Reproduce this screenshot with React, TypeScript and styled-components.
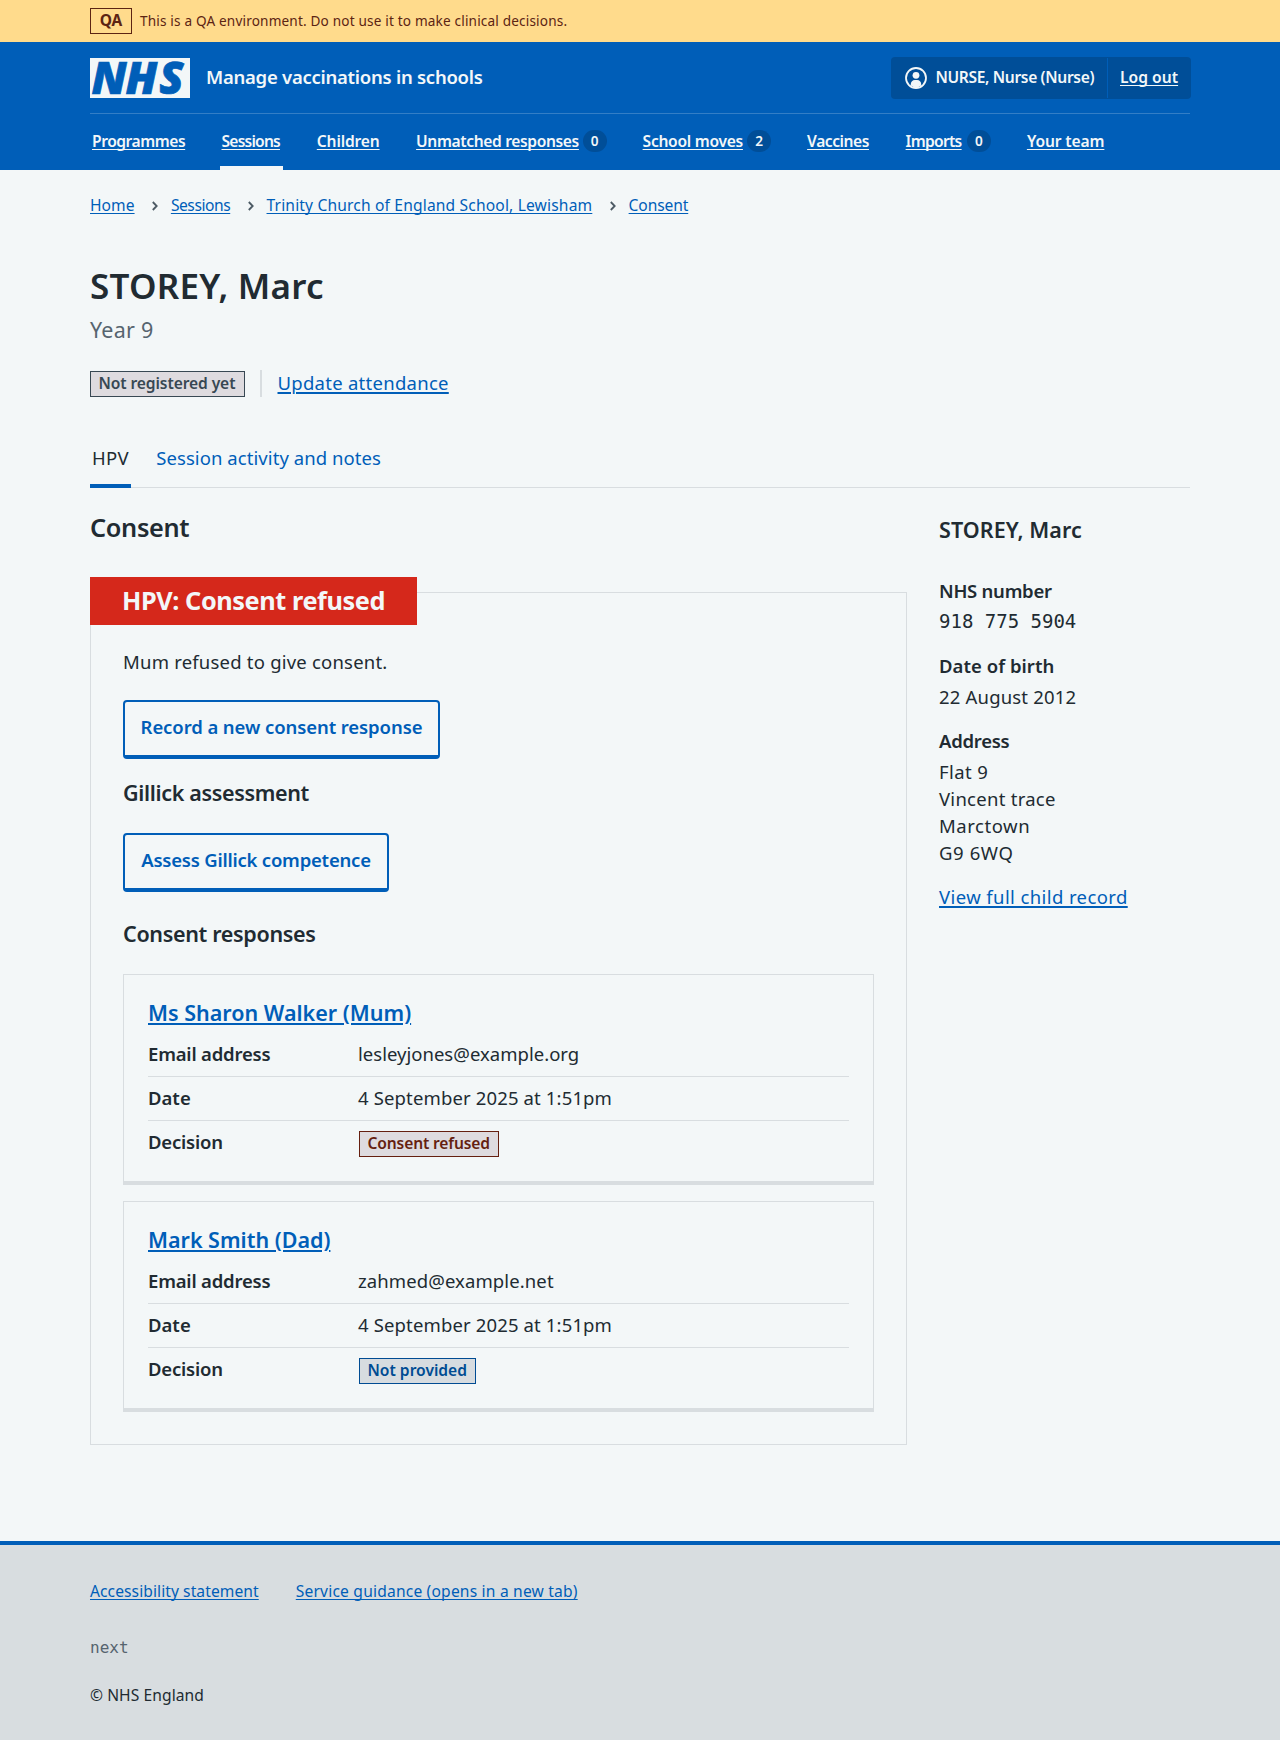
import React from "react";
import styled, { createGlobalStyle, css } from "styled-components";

const color = {
  page: "#f3f7f8",
  text: "#212b32",
  secondary: "#56646f",
  blue: "#005eb8",
  darkBlue: "#004e98",
  border: "#d8dde0",
  red: "#d5281b",
  warm: "#ffdb8c",
  brown: "#5c2413",
};
const sans = `"Noto Sans", "Open Sans", sans-serif`;
const mono = `"DejaVu Sans Mono", monospace`;

const GlobalStyle = createGlobalStyle`
  *, *::before, *::after { box-sizing: border-box; }
  body {
    margin: 0;
    background: ${color.page};
    color: ${color.text};
    font: 400 18.5px/28px ${sans};
  }
  h1, h2, h3, h4, p, dl, dt, dd { margin: 0; }
`;

type Tracked = { $ls?: number };
const tracking = css<Tracked>`
  letter-spacing: ${(p) => p.$ls ?? 0}px;
  white-space: nowrap;
`;

const Container = styled.div`
  width: 1100px;
  margin: 0 auto;
`;

const Link = styled.a<Tracked & { $large?: boolean }>`
  ${tracking}
  color: ${color.blue};
  text-decoration: underline;
  text-decoration-thickness: ${(p) => (p.$large ? "1.5px" : "1px")};
  text-decoration-skip-ink: ${(p) => (p.$large ? "auto" : "none")};
  text-underline-offset: ${(p) => (p.$large ? "2px" : "1.5px")};
`;

/* Environment banner */
const Banner = styled.div`
  background: ${color.warm};
  color: ${color.brown};
`;
const BannerRow = styled(Container)`
  display: flex;
  align-items: center;
  height: 42px;
`;
const EnvTag = styled.strong`
  width: 42px;
  height: 26px;
  margin-right: 8px;
  border: 1px solid ${color.brown};
  font: 700 15.5px/22px ${sans};
  text-align: center;
`;
const BannerText = styled.span<Tracked>`
  ${tracking}
  font-size: 13.6px;
`;

/* Header */
const Header = styled.header`
  background: ${color.blue};
  color: ${color.page};
`;
const HeaderTop = styled.div`
  display: flex;
  align-items: center;
  height: 72px;
  border-bottom: 1px solid #337ec6;
`;
const Logo = styled.svg`
  display: block;
  flex: none;
  width: 100px;
  height: 40px;
  margin-right: 16px;
  overflow: visible;
`;
const ServiceName = styled.a<Tracked>`
  ${tracking}
  padding-bottom: 2px;
  font-weight: 600;
`;
const Account = styled.div`
  display: flex;
  height: 42px;
  margin-left: auto;
  margin-right: -1px;
  border-radius: 4px;
  background: ${color.darkBlue};
  font: 600 15.6px/40px ${sans};
`;
const AccountItem = styled.div<{ $width: number }>`
  display: flex;
  align-items: flex-start;
  width: ${(p) => p.$width}px;
  padding-left: 14px;
  & + & {
    margin: 1px 0;
    border-left: 1px solid ${color.blue};
    padding-left: 12px;
    line-height: 38px;
  }
  svg {
    margin: 10px 8.5px 0 0;
  }
`;
const AccountName = styled.span<Tracked>`
  ${tracking}
`;
const InverseLink = styled(Link)`
  color: inherit;
`;

const Nav = styled.nav`
  display: flex;
  gap: 32px;
  height: 56px;
  font: 600 15.6px/52px ${sans};
`;
const NavItem = styled.div<{ $current?: boolean; $width: number }>`
  display: flex;
  align-items: center;
  width: ${(p) => p.$width}px;
  padding: 1px 2px 0;
  border-bottom: 4px solid ${(p) => (p.$current ? color.page : "transparent")};
`;
const Count = styled.span`
  width: 24px;
  height: 22px;
  margin-left: auto;
  border-radius: 12px;
  background: ${color.darkBlue};
  font: 600 13.6px/21px ${sans};
  text-align: center;
`;

/* Page heading */
const Breadcrumb = styled.nav`
  display: flex;
  align-items: center;
  padding-top: 21px;
  font-size: 15.6px;
  svg {
    margin: 1px 13px 0 17.3px;
  }
`;
const PageTitle = styled.h1<Tracked>`
  ${tracking}
  margin-top: 45px;
  font: 600 35px/44px ${sans};
`;
const Caption = styled.p<Tracked>`
  ${tracking}
  margin-top: 6px;
  color: ${color.secondary};
  font-size: 21.5px;
  line-height: 32px;
`;
const StatusRow = styled.div`
  display: flex;
  align-items: center;
  height: 27px;
  margin-top: 24px;
  line-height: 25px;
  > a {
    padding-bottom: 2px;
  }
`;
const Divider = styled.span`
  width: 2px;
  height: 27px;
  margin: 0 15.5px 0 15px;
  background: ${color.border};
`;
const tones = {
  grey: { fg: "#384853", bg: "#dedbdf" },
  red: { fg: "#651f10", bg: "#dedbdf" },
  blue: { fg: "#004c93", bg: "#d7dce0" },
};
const Tag = styled.strong<Tracked & { $tone: keyof typeof tones; $width: number }>`
  ${tracking}
  display: block;
  width: ${(p) => p.$width}px;
  height: 26px;
  padding-left: 7.5px;
  border: 1px solid ${(p) => tones[p.$tone].fg};
  background: ${(p) => tones[p.$tone].bg};
  color: ${(p) => tones[p.$tone].fg};
  font: 600 15.6px/22px ${sans};
`;

const Tabs = styled.div`
  display: flex;
  gap: 23.5px;
  margin-top: 47px;
  box-shadow: inset 0 -1px ${color.border};
`;
const Tab = styled.a<Tracked & { $current?: boolean }>`
  ${tracking}
  padding: 0 2px 12px;
  border-bottom: 4px solid ${(p) => (p.$current ? color.blue : "transparent")};
  color: ${(p) => (p.$current ? color.text : color.blue)};
`;

/* Content */
const Columns = styled.main`
  display: grid;
  grid-template-columns: 817px 1fr;
  column-gap: 32px;
`;
const SectionTitle = styled.h2<Tracked>`
  ${tracking}
  margin: 21px 0 47px;
  font: 600 25.3px/36px ${sans};
`;
const Panel = styled.section`
  padding: 0 32px 32px;
  border: 1px solid ${color.border};
`;
const PanelTitle = styled.h3<Tracked>`
  ${tracking}
  width: 327px;
  height: 48px;
  margin: -16px 0 23px -33px;
  padding-left: 32px;
  background: ${color.red};
  color: ${color.page};
  font: 700 25.3px/47px ${sans};
`;
const Text = styled.p<Tracked>`
  ${tracking}
`;
const Button = styled.button<Tracked & { $width: number }>`
  ${tracking}
  display: block;
  width: ${(p) => p.$width}px;
  height: 59px;
  margin-top: 24px;
  padding: 11px 0 14px;
  border: 2px solid ${color.blue};
  border-bottom-width: 4px;
  border-radius: 4px;
  background: transparent;
  color: ${color.blue};
  font: 600 18.5px/28px ${sans};
`;
const SubTitle = styled.h4<Tracked & { $top: number; $bottom?: number }>`
  ${tracking}
  margin: ${(p) => p.$top}px 0 ${(p) => p.$bottom ?? 25}px;
  font: 600 21.5px/30px ${sans};
`;
const Responses = styled.div`
  display: grid;
  gap: 16px;
`;
const Card = styled.article`
  padding: 23px 24px 25px;
  border: 1px solid ${color.border};
  border-bottom-width: 4px;
`;
const CardTitle = styled.h4`
  margin-bottom: 5px;
  font: 600 21.5px/30px ${sans};
`;
const Row = styled.div`
  display: grid;
  grid-template-columns: 210px 1fr;
  height: 44px;
  padding-top: 7px;
  border-bottom: 1px solid ${color.border};
  &:last-child {
    height: 35px;
    border-bottom: 0;
  }
`;
const Term = styled.dt<Tracked>`
  ${tracking}
  font-weight: 600;
`;
const Value = styled.dd<Tracked>`
  ${tracking}
`;
const TagValue = styled.dd`
  padding: 3px 0 0 1px;
`;

/* Child summary */
const Aside = styled.aside`
  padding-top: 27px;
  line-height: 27px;
`;
const Details = styled.dl`
  dd {
    margin: 4px 0 17px;
  }
`;
const NhsNumber = styled.dd`
  font-family: ${mono};
  font-size: 19px;
  white-space: nowrap;
`;

/* Footer */
const Footer = styled.footer`
  height: 199px;
  margin-top: 96px;
  padding-top: 34px;
  border-top: 4px solid ${color.blue};
  background: ${color.border};
  font-size: 15.6px;
  line-height: 24px;
`;
const FooterLinks = styled.div`
  display: flex;
  gap: 37px;
  margin-bottom: 33px;
`;
const Version = styled.p`
  margin-bottom: 23px;
  color: ${color.secondary};
  font-family: ${mono};
  font-size: 16px;
`;

const NhsLogo = () => (
  <Logo viewBox="0 0 100 40" role="img" aria-label="NHS">
    <rect width="100" height="40" fill={color.page} />
    <text
      x="1.6 35.6 69.2"
      y="36"
      fill={color.blue}
      stroke={color.blue}
      strokeWidth="0.7"
      fontFamily={`"Open Sans", sans-serif`}
      fontSize="44.5"
      fontWeight="800"
      fontStyle="italic"
    >
      NHS
    </text>
  </Logo>
);

const UserIcon = () => (
  <svg width="22" height="22" viewBox="0 0 22 22" fill={color.page}>
    <circle cx="11" cy="11" r="10" fill="none" stroke={color.page} strokeWidth="1.8" />
    <circle cx="11" cy="8.3" r="3.4" />
    <path d="M5.8 18.5v-1.2c0-2.6 1.8-4.3 4-4.3h2.4c2.2 0 4 1.7 4 4.3v1.2A9 9 0 0 1 5.8 18.5Z" />
  </svg>
);

const Chevron = () => (
  <svg width="6" height="10" viewBox="0 0 6 10" fill="none" stroke="#4c5a64" strokeWidth="1.8">
    <path d="M0.8 1 4.7 5 0.8 9" />
  </svg>
);

const navItems = [
  { label: "Programmes", ls: -0.46, width: 97.5 },
  { label: "Sessions", ls: -0.78, width: 63.3, current: true },
  { label: "Children", ls: -0.15, width: 67.3 },
  { label: "Unmatched responses", ls: -0.37, width: 194.5, count: 0 },
  { label: "School moves", ls: -0.28, width: 132.5, count: 2 },
  { label: "Vaccines", ls: -0.45, width: 66.5 },
  { label: "Imports", ls: -0.7, width: 89.3, count: 0 },
  { label: "Your team", ls: -0.12, width: 81 },
];

const crumbs = [
  { label: "Home", ls: 0.05 },
  { label: "Sessions", ls: -0.44 },
  { label: "Trinity Church of England School, Lewisham", ls: 0.16 },
  { label: "Consent", ls: -0.12 },
];

const responses = [
  {
    name: "Ms Sharon Walker (Mum)", nameLs: 0.01,
    email: "lesleyjones@example.org", emailLs: 0.02,
    decision: "Consent refused", decisionLs: -0.14, tone: "red" as const, width: 140,
  },
  {
    name: "Mark Smith (Dad)", nameLs: 0,
    email: "zahmed@example.net", emailLs: 0.1,
    decision: "Not provided", decisionLs: 0, tone: "blue" as const, width: 117,
  },
];

export default function App() {
  return (
    <>
      <GlobalStyle />
      <Banner>
        <BannerRow>
          <EnvTag>QA</EnvTag>
          <BannerText $ls={0.17}>This is a QA environment. Do not use it to make clinical decisions.</BannerText>
        </BannerRow>
      </Banner>
      <Header>
        <Container>
          <HeaderTop>
            <NhsLogo />
            <ServiceName $ls={-0.26}>Manage vaccinations in schools</ServiceName>
            <Account>
              <AccountItem $width={216}>
                <UserIcon />
                <AccountName $ls={-0.35}>NURSE, Nurse (Nurse)</AccountName>
              </AccountItem>
              <AccountItem $width={84}>
                <InverseLink $ls={0.03}>Log out</InverseLink>
              </AccountItem>
            </Account>
          </HeaderTop>
          <Nav>
            {navItems.map((n) => (
              <NavItem key={n.label} $current={n.current} $width={n.width}>
                <InverseLink $ls={n.ls}>{n.label}</InverseLink>
                {n.count !== undefined && <Count>{n.count}</Count>}
              </NavItem>
            ))}
          </Nav>
        </Container>
      </Header>
      <Container>
        <Breadcrumb>
          {crumbs.map((c, i) => (
            <React.Fragment key={c.label}>
              {i > 0 && <Chevron />}
              <Link $ls={c.ls}>{c.label}</Link>
            </React.Fragment>
          ))}
        </Breadcrumb>
        <PageTitle $ls={0.24}>STOREY, Marc</PageTitle>
        <Caption $ls={0.25}>Year 9</Caption>
        <StatusRow>
          <Tag $tone="grey" $width={155} $ls={-0.1}>Not registered yet</Tag>
          <Divider />
          <Link $large $ls={0.27}>Update attendance</Link>
        </StatusRow>
        <Tabs>
          <Tab $current $ls={0.25}>HPV</Tab>
          <Tab $ls={0.07}>Session activity and notes</Tab>
        </Tabs>
        <Columns>
          <div>
            <SectionTitle $ls={-0.33}>Consent</SectionTitle>
            <Panel>
              <PanelTitle $ls={-0.42}>HPV: Consent refused</PanelTitle>
              <Text $ls={0.21}>Mum refused to give consent.</Text>
              <Button $width={317} $ls={-0.09}>Record a new consent response</Button>
              <SubTitle $top={19} $ls={-0.35}>Gillick assessment</SubTitle>
              <Button $width={266} $ls={-0.22}>Assess Gillick competence</Button>
              <SubTitle $top={27} $ls={-0.33}>Consent responses</SubTitle>
              <Responses>
                {responses.map((r) => (
                  <Card key={r.name}>
                    <CardTitle>
                      <Link $large $ls={r.nameLs}>{r.name}</Link>
                    </CardTitle>
                    <dl>
                      <Row>
                        <Term $ls={-0.19}>Email address</Term>
                        <Value $ls={r.emailLs}>{r.email}</Value>
                      </Row>
                      <Row>
                        <Term $ls={0}>Date</Term>
                        <Value $ls={0.14}>4 September 2025 at 1:51pm</Value>
                      </Row>
                      <Row>
                        <Term $ls={-0.2}>Decision</Term>
                        <TagValue>
                          <Tag $tone={r.tone} $width={r.width} $ls={r.decisionLs}>{r.decision}</Tag>
                        </TagValue>
                      </Row>
                    </dl>
                  </Card>
                ))}
              </Responses>
            </Panel>
          </div>
          <Aside>
            <SubTitle $top={0} $bottom={32} $ls={0.08}>STOREY, Marc</SubTitle>
            <Details>
              <Term $ls={-0.27}>NHS number</Term>
              <NhsNumber>918 775 5904</NhsNumber>
              <Term $ls={0.04}>Date of birth</Term>
              <Value $ls={0.18}>22 August 2012</Value>
              <Term $ls={-0.28}>Address</Term>
              <dd>
                <Text $ls={0.4}>Flat 9</Text>
                <Text $ls={0.27}>Vincent trace</Text>
                <Text $ls={0.55}>Marctown</Text>
                <Text $ls={0.6}>G9 6WQ</Text>
              </dd>
            </Details>
            <Link $large $ls={0.4}>View full child record</Link>
          </Aside>
        </Columns>
      </Container>
      <Footer>
        <Container>
          <FooterLinks>
            <Link $ls={0.08}>Accessibility statement</Link>
            <Link $ls={0.19}>Service guidance (opens in a new tab)</Link>
          </FooterLinks>
          <Version>next</Version>
          <Text $ls={0.08}>© NHS England</Text>
        </Container>
      </Footer>
    </>
  );
}
